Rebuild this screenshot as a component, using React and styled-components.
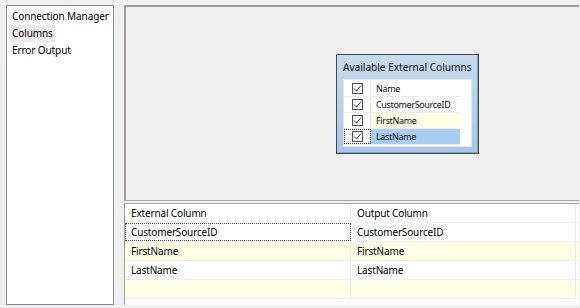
import React from "react";
import styled, { createGlobalStyle } from "styled-components";

const Global = createGlobalStyle`
  html, body { margin: 0; padding: 0; background: #f0f0f0; }
  body { font-family: "Noto Sans", "Open Sans", sans-serif; color: #000; }
  * { box-sizing: border-box; }
`;

const Page = styled.div`
  display: flex;
  gap: 10px;
  width: 580px;
  height: 308px;
  padding: 5px 1px 3px 6px;
`;

const NavPanel = styled.div`
  width: 108px;
  flex: none;
  background: #fff;
  border: 1px solid #828790;
  padding: 2px 3px;
  display: flex;
  flex-direction: column;
`;

const NavItem = styled.div`
  height: 17px;
  line-height: 17px;
  padding: 0 2px;
  font-size: 10px;
  letter-spacing: -0.1px;
  align-self: flex-start;
  background: ${(p) => (p.$active ? "#ececec" : "transparent")};
  white-space: nowrap;
`;

const Main = styled.div`
  flex: 1;
  display: flex;
  flex-direction: column;
`;

const Canvas = styled.div`
  position: relative;
  height: 196px;
  flex: none;
  background: #f0f0f0;
  border-top: 2px solid #9a9a9a;
  border-left: 2px solid #9a9a9a;
  border-bottom: 1px solid #a8a8a8;
`;

const Node = styled.div`
  position: absolute;
  left: 210px;
  top: 47px;
  width: 143px;
  height: 100px;
  border: 1px solid #3f4a55;
  box-shadow: inset -1px -1px 0 #6fa3c8;
  background: linear-gradient(#c6dbf0, #a9c8e6);
  padding: 0 6px 6px 6px;
  display: flex;
  flex-direction: column;
`;

const NodeTitle = styled.div`
  font-size: 10.2px;
  letter-spacing: -0.05px;
  height: 24px;
  line-height: 24px;
  white-space: nowrap;
  color: #111;
`;

const List = styled.div`
  flex: 1;
  background: #fff;
  border: 1px solid #e2e8ef;
  padding: 1px 11px 0 0;
`;

const ListRow = styled.div`
  display: grid;
  grid-template-columns: 27px 1fr;
  height: 16px;
  border-bottom: 1px solid #eeeeee;
  background: ${(p) => p.$bg || "#fff"};
`;

const CheckCell = styled.div`
  display: flex;
  align-items: center;
  justify-content: center;
  border-right: 1px solid #e6e6e6;
  outline: ${(p) => (p.$focus ? "1px dotted #333" : "none")};
  outline-offset: -1px;
  background: #fff;
`;

const Box = styled.div`
  width: 11px;
  height: 11px;
  border: 1px solid #555;
  background: #fff;
  display: flex;
  align-items: center;
  justify-content: center;
`;

const ListText = styled.div`
  font-size: 9px;
  letter-spacing: -0.35px;
  line-height: 15px;
  padding-left: 5px;
  white-space: nowrap;
  color: #111;
`;

const Grid = styled.div`
  flex: 1;
  background: #fff;
  border-left: 1px solid #a0a0a0;
  margin-top: 2px;
  border-top: 1px solid #a8a8a8;
`;

const GridRow = styled.div`
  display: grid;
  grid-template-columns: 226px 225px;
  height: 19px;
  background: ${(p) => p.$bg || "#fff"};
  border-bottom: 1px solid #f0f0f0;
`;

const Cell = styled.div`
  font-size: 10px;
  letter-spacing: -0.15px;
  line-height: 18px;
  padding-left: 6px;
  white-space: nowrap;
  border-right: 1px solid #ebebeb;
  outline: ${(p) => (p.$focus ? "1px dotted #555" : "none")};
  outline-offset: -1px;
`;

const Check = () => (
  <svg width="9" height="9" viewBox="0 0 9 9">
    <path d="M1 4.5 L3.5 7 L8 1.5" fill="none" stroke="#333" strokeWidth="1" />
  </svg>
);

const listRows = [
  { name: "Name" },
  { name: "CustomerSourceID" },
  { name: "FirstName", bg: "#ffffe6" },
  { name: "LastName", bg: "#a8cdf0", focus: true },
];

const gridRows = [
  { a: "CustomerSourceID", b: "CustomerSourceID", focus: true },
  { a: "FirstName", b: "FirstName", bg: "#ffffe6" },
  { a: "LastName", b: "LastName" },
  { a: "", b: "", bg: "#ffffe6" },
];

export default function App() {
  return (
    <>
      <Global />
      <Page>
        <NavPanel>
          <NavItem>Connection Manager</NavItem>
          <NavItem $active>Columns</NavItem>
          <NavItem>Error Output</NavItem>
        </NavPanel>
        <Main>
          <Canvas>
            <Node>
              <NodeTitle>Available External Columns</NodeTitle>
              <List>
                {listRows.map((r) => (
                  <ListRow key={r.name} $bg={r.bg}>
                    <CheckCell $focus={r.focus}>
                      <Box>
                        <Check />
                      </Box>
                    </CheckCell>
                    <ListText>{r.name}</ListText>
                  </ListRow>
                ))}
              </List>
            </Node>
          </Canvas>
          <Grid>
            <GridRow>
              <Cell>External Column</Cell>
              <Cell>Output Column</Cell>
            </GridRow>
            {gridRows.map((r, i) => (
              <GridRow key={i} $bg={r.bg}>
                <Cell $focus={r.focus}>{r.a}</Cell>
                <Cell>{r.b}</Cell>
              </GridRow>
            ))}
          </Grid>
        </Main>
      </Page>
    </>
  );
}
